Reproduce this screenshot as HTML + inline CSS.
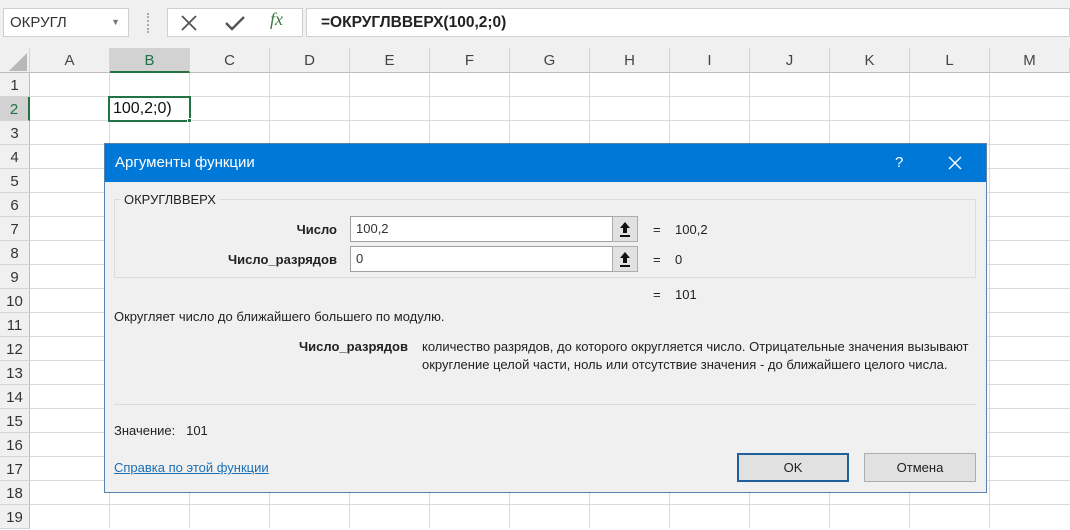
<!DOCTYPE html>
<html><head><meta charset="utf-8"><style>
*{margin:0;padding:0;box-sizing:border-box}
body{width:1070px;height:528px;overflow:hidden;background:#fff;font-family:"Liberation Sans",sans-serif;position:relative}
.a{position:absolute}
.top{left:0;top:0;width:1070px;height:48px;background:#f0f0f0}
.hdr{top:48px;height:25px;background:#f0f0f0;border-right:1px solid #d4d4d4;border-bottom:1px solid #bdbdbd;font-size:15px;color:#444;text-align:center;line-height:26px}
.rh{left:0;width:30px;height:24px;background:#f0f0f0;border-right:1px solid #bdbdbd;border-bottom:1px solid #d4d4d4;font-size:15px;color:#333;text-align:center;line-height:25px}
.hl{left:30px;width:1040px;height:1px;background:#dadada}
.vl{top:73px;width:1px;height:455px;background:#dadada}
.dlg{left:104px;top:143px;width:883px;height:350px;background:#f0f0f0;border:1px solid #5a82b0;font-size:13px;color:#222}
.tb{left:0;top:0;width:881px;height:38px;background:#0078d7;color:#fff;font-size:15px;line-height:38px;padding-left:10px}
.t{position:absolute;white-space:nowrap;font-size:13px;line-height:15px}
.inp{position:absolute;height:26px;background:#fff;border:1px solid #a0a0a0;font-size:13px;line-height:24px;padding-left:5px;color:#333}
.btn{position:absolute;width:26px;height:26px;background:#e1e1e1;border:1px solid #adadad;text-align:center}
.b{position:absolute;height:29px;background:#e1e1e1;border:1px solid #adadad;font-size:13px;text-align:center;line-height:27px}
</style></head><body>
<div class="a top"></div>
<div class="a" style="left:3px;top:8px;width:126px;height:29px;background:#fff;border:1px solid #d0d0d0;font-size:15px;line-height:27px;padding-left:6px;color:#333">ОКРУГЛ<span style="position:absolute;right:8px;top:0;font-size:9px;color:#777">▼</span></div>
<div class="a" style="left:147px;top:13px;width:3px;height:20px;border-left:2px dotted #aaa"></div>
<div class="a" style="left:167px;top:8px;width:136px;height:29px;background:#fff;border:1px solid #d0d0d0"></div>
<svg class="a" style="left:180px;top:14px" width="18" height="18"><path d="M2 2L16 16M16 2L2 16" stroke="#555" stroke-width="1.8"/></svg>
<svg class="a" style="left:224px;top:14px" width="22" height="18"><path d="M2 9L8 15L20 3" stroke="#555" stroke-width="2.4" fill="none"/></svg>
<div class="a" style="left:270px;top:9px;font-family:'Liberation Serif',serif;font-style:italic;font-size:18px;color:#3c7a3c">fx</div>
<div class="a" style="left:306px;top:8px;width:764px;height:29px;background:#fff;border:1px solid #d0d0d0;font-size:15.5px;font-weight:bold;line-height:27px;padding-left:14px;color:#222">=ОКРУГЛВВЕРХ(100,2;0)</div>
<div class="a hdr" style="left:0;width:30px"><svg style="position:absolute;left:9px;top:5px" width="18" height="18"><path d="M18 0V18H0Z" fill="#b8b8b8"/></svg></div>
<div class="a hdr" style="left:30px;width:80px">A</div>
<div class="a hdr" style="left:110px;width:80px;background:#d2d2d2;border-bottom:2px solid #217346;color:#217346">B</div>
<div class="a hdr" style="left:190px;width:80px">C</div>
<div class="a hdr" style="left:270px;width:80px">D</div>
<div class="a hdr" style="left:350px;width:80px">E</div>
<div class="a hdr" style="left:430px;width:80px">F</div>
<div class="a hdr" style="left:510px;width:80px">G</div>
<div class="a hdr" style="left:590px;width:80px">H</div>
<div class="a hdr" style="left:670px;width:80px">I</div>
<div class="a hdr" style="left:750px;width:80px">J</div>
<div class="a hdr" style="left:830px;width:80px">K</div>
<div class="a hdr" style="left:910px;width:80px">L</div>
<div class="a hdr" style="left:990px;width:80px">M</div>
<div class="a vl" style="left:109px"></div><div class="a vl" style="left:189px"></div><div class="a vl" style="left:269px"></div><div class="a vl" style="left:349px"></div><div class="a vl" style="left:429px"></div><div class="a vl" style="left:509px"></div><div class="a vl" style="left:589px"></div><div class="a vl" style="left:669px"></div><div class="a vl" style="left:749px"></div><div class="a vl" style="left:829px"></div><div class="a vl" style="left:909px"></div><div class="a vl" style="left:989px"></div>
<div class="a hl" style="top:96px"></div><div class="a hl" style="top:120px"></div><div class="a hl" style="top:144px"></div><div class="a hl" style="top:168px"></div><div class="a hl" style="top:192px"></div><div class="a hl" style="top:216px"></div><div class="a hl" style="top:240px"></div><div class="a hl" style="top:264px"></div><div class="a hl" style="top:288px"></div><div class="a hl" style="top:312px"></div><div class="a hl" style="top:336px"></div><div class="a hl" style="top:360px"></div><div class="a hl" style="top:384px"></div><div class="a hl" style="top:408px"></div><div class="a hl" style="top:432px"></div><div class="a hl" style="top:456px"></div><div class="a hl" style="top:480px"></div><div class="a hl" style="top:504px"></div>
<div class="a rh" style="top:73px">1</div>
<div class="a rh" style="top:97px;background:#d2d2d2;border-right:2px solid #217346;color:#217346">2</div>
<div class="a rh" style="top:121px">3</div><div class="a rh" style="top:145px">4</div><div class="a rh" style="top:169px">5</div><div class="a rh" style="top:193px">6</div><div class="a rh" style="top:217px">7</div><div class="a rh" style="top:241px">8</div><div class="a rh" style="top:265px">9</div><div class="a rh" style="top:289px">10</div><div class="a rh" style="top:313px">11</div><div class="a rh" style="top:337px">12</div><div class="a rh" style="top:361px">13</div><div class="a rh" style="top:385px">14</div><div class="a rh" style="top:409px">15</div><div class="a rh" style="top:433px">16</div><div class="a rh" style="top:457px">17</div><div class="a rh" style="top:481px">18</div><div class="a rh" style="top:505px">19</div>
<div class="a" style="left:108px;top:96px;width:83px;height:26px;border:2px solid #217346;background:#fff;font-size:16px;line-height:22px;padding-left:3px;color:#111">100,2;0)</div>
<div class="a" style="left:187px;top:118px;width:5px;height:5px;background:#217346;border:1px solid #fff"></div>

<div class="a dlg">
 <div class="a tb">Аргументы функции
  <span style="position:absolute;left:790px;top:0;font-size:15px">?</span>
  <svg style="position:absolute;left:843px;top:12px" width="14" height="14"><path d="M1 1L13 13M13 1L1 13" stroke="#fff" stroke-width="1.4"/></svg>
 </div>
 <div class="a" style="left:9px;top:55px;width:862px;height:79px;border:1px solid #dcdcdc"></div>
 <div class="t" style="left:16px;top:48px;background:#f0f0f0;padding:0 3px">ОКРУГЛВВЕРХ</div>
 <div class="t" style="left:150px;top:78px;width:82px;text-align:right;font-weight:bold">Число</div>
 <div class="t" style="left:100px;top:108px;width:132px;text-align:right;font-weight:bold">Число_разрядов</div>
 <div class="inp" style="left:245px;top:72px;width:263px">100,2</div>
 <div class="inp" style="left:245px;top:102px;width:263px">0</div>
 <div class="btn" style="left:507px;top:72px"><svg width="24" height="24"><path d="M12 5L7 11H10V16H14V11H17Z" fill="#111"/><rect x="7" y="18" width="10" height="2" fill="#111"/></svg></div>
 <div class="btn" style="left:507px;top:102px"><svg width="24" height="24"><path d="M12 5L7 11H10V16H14V11H17Z" fill="#111"/><rect x="7" y="18" width="10" height="2" fill="#111"/></svg></div>
 <div class="t" style="left:548px;top:78px">=&nbsp;&nbsp;&nbsp;&nbsp;100,2</div>
 <div class="t" style="left:548px;top:108px">=&nbsp;&nbsp;&nbsp;&nbsp;0</div>
 <div class="t" style="left:548px;top:143px">=&nbsp;&nbsp;&nbsp;&nbsp;101</div>
 <div class="t" style="left:9px;top:165px">Округляет число до ближайшего большего по модулю.</div>
 <div class="t" style="left:130px;top:195px;width:173px;text-align:right;font-weight:bold">Число_разрядов</div>
 <div class="t" style="left:317px;top:195px">количество разрядов, до которого округляется число. Отрицательные значения вызывают</div>
 <div class="t" style="left:317px;top:213px">округление целой части, ноль или отсутствие значения - до ближайшего целого числа.</div>
 <div class="a" style="left:9px;top:260px;width:862px;height:1px;background:#dcdcdc"></div>
 <div class="t" style="left:9px;top:279px">Значение:&nbsp;&nbsp;&nbsp;101</div>
 <div class="t" style="left:9px;top:316px;color:#1a6fb5;text-decoration:underline">Справка по этой функции</div>
 <div class="b" style="left:632px;top:309px;width:112px;border:2px solid #1e5f9c;line-height:25px">OK</div>
 <div class="b" style="left:759px;top:309px;width:112px">Отмена</div>
</div>
</body></html>
